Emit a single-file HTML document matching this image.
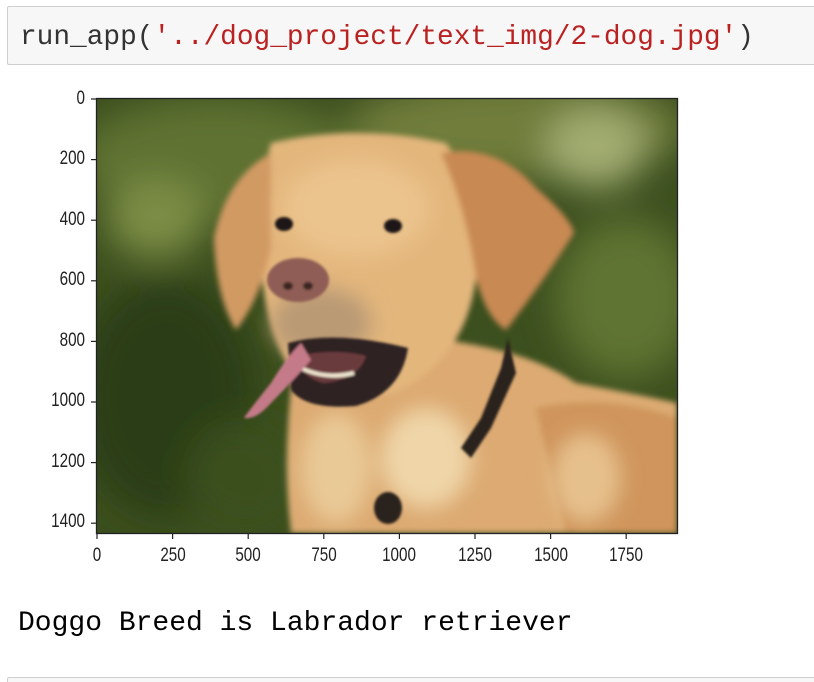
<!DOCTYPE html>
<html><head><meta charset="utf-8"><style>
html,body{margin:0;padding:0;background:#fff;width:814px;height:682px;overflow:hidden;position:relative;font-family:"Liberation Sans",sans-serif}
.cell{position:absolute;left:7px;top:6px;width:820px;height:57px;background:#f7f7f7;border:1px solid #cfcfcf;border-radius:2px}
.code{position:absolute;left:20px;top:21px;font-family:"Liberation Mono",monospace;font-size:27.8px;line-height:34px;color:#333;white-space:pre}
.s{color:#ba2121}
.out{position:absolute;left:18px;top:607px;font-family:"Liberation Mono",monospace;font-size:28px;line-height:34px;color:#000;white-space:pre}
.cell2{position:absolute;left:7px;top:677px;width:820px;height:20px;border:1px solid #cfcfcf;border-radius:2px;background:#f7f7f7}
.yl{position:absolute;font-size:19px;color:#222;transform:scaleX(0.8);transform-origin:right center;text-align:right;width:60px}
.xl{position:absolute;top:545px;font-size:19px;color:#222;transform:scaleX(0.8);width:60px;text-align:center}
</style></head><body>
<div class="cell"></div>
<div class="code">run_app(<span class="s">'../dog_project/text_img/2-dog.jpg'</span>)</div>

<svg style="position:absolute;left:0;top:0" width="814" height="682">
<defs>
<filter id="b1" x="-50%" y="-50%" width="200%" height="200%"><feGaussianBlur stdDeviation="18"/></filter>
<filter id="b2"><feGaussianBlur stdDeviation="3"/></filter>
<filter id="b4" x="-50%" y="-50%" width="200%" height="200%"><feGaussianBlur stdDeviation="10"/></filter>
<filter id="b3"><feGaussianBlur stdDeviation="1.2"/></filter>
<clipPath id="c"><rect x="0" y="0" width="581" height="435"/></clipPath>
</defs>
<g transform="translate(96,98)" clip-path="url(#c)">
<rect width="581" height="435" fill="#3c4f1e"/>
<g filter="url(#b1)">
<ellipse cx="120" cy="60" rx="140" ry="60" fill="#5f7230"/>
<ellipse cx="420" cy="30" rx="170" ry="50" fill="#6f7d3a"/>
<ellipse cx="500" cy="50" rx="50" ry="40" fill="#a3ad72"/>
<ellipse cx="60" cy="120" rx="50" ry="40" fill="#7b8d45"/>
<ellipse cx="530" cy="200" rx="70" ry="80" fill="#5e7330"/>
<ellipse cx="70" cy="300" rx="90" ry="120" fill="#2b3c15"/>
<ellipse cx="150" cy="380" rx="60" ry="60" fill="#3b4f1d"/>
</g>
<g filter="url(#b2)">
<path d="M200 250 Q230 230 330 240 Q430 250 480 285 Q560 300 581 305 L581 435 L195 435 Q185 350 200 250Z" fill="#dcaa72"/>
<path d="M440 310 Q510 295 581 320 L581 435 L470 435Z" fill="#cf955c"/>
<path d="M175 45 Q260 25 350 45 Q390 100 380 180 Q370 260 300 295 Q240 305 200 280 Q165 230 165 150 Q165 80 175 45Z" fill="#e3b67c"/>
<path d="M175 55 Q130 80 118 140 Q120 200 140 232 Q165 200 175 150Z" fill="#d29a63"/>
<path d="M345 55 Q400 45 440 90 Q475 120 478 135 Q450 180 410 232 Q390 220 380 180 Q370 110 345 55Z" fill="#c98953"/>
</g>
<g filter="url(#b4)">
<ellipse cx="330" cy="360" rx="45" ry="50" fill="#efd5a8"/>
<ellipse cx="240" cy="370" rx="35" ry="55" fill="#e9c996"/>
<ellipse cx="490" cy="380" rx="35" ry="45" fill="#e6c08c"/>
<ellipse cx="260" cy="110" rx="75" ry="50" fill="#ebc38c"/>
<ellipse cx="225" cy="225" rx="50" ry="35" fill="#b99a74"/>
</g>
<g filter="url(#b3)">
<path d="M412 240 L420 275 L395 330 L375 360 L365 350 L385 320 L405 270Z" fill="#2a201a"/>
<ellipse cx="292" cy="410" rx="14" ry="16" fill="#2a201a"/>
<path d="M192 245 Q240 232 312 250 Q305 295 260 308 Q210 312 195 292Z" fill="#2e2424"/>
<path d="M200 258 Q240 250 270 258 Q262 282 228 285 Q205 280 200 258Z" fill="#6b3a3e"/>
<path d="M205 270 Q230 282 258 275" stroke="#f0e6d0" stroke-width="4" fill="none"/>
<path d="M205 245 Q190 260 175 285 Q155 310 148 320 Q160 322 175 305 Q195 285 215 262Z" fill="#c47a88"/>
<ellipse cx="202" cy="182" rx="31" ry="22" fill="#8f5d55"/>
<ellipse cx="192" cy="188" rx="5" ry="4" fill="#3a2524"/>
<ellipse cx="212" cy="188" rx="5" ry="4" fill="#3a2524"/>
<ellipse cx="188" cy="126" rx="9" ry="7" fill="#1d1512"/>
<ellipse cx="297" cy="128" rx="9" ry="7" fill="#1d1512"/>
</g>
</g>
<rect x="96.5" y="98.5" width="581" height="435" fill="none" stroke="#222" stroke-width="1.3"/>
<g stroke="#222" stroke-width="1.2">
<line x1="91" y1="99" x2="96" y2="99"/><line x1="91" y1="159.6" x2="96" y2="159.6"/><line x1="91" y1="220.2" x2="96" y2="220.2"/><line x1="91" y1="280.8" x2="96" y2="280.8"/><line x1="91" y1="341.4" x2="96" y2="341.4"/><line x1="91" y1="402" x2="96" y2="402"/><line x1="91" y1="462.6" x2="96" y2="462.6"/><line x1="91" y1="523.2" x2="96" y2="523.2"/>
<line x1="97" y1="534" x2="97" y2="539"/><line x1="172.6" y1="534" x2="172.6" y2="539"/><line x1="248.2" y1="534" x2="248.2" y2="539"/><line x1="323.8" y1="534" x2="323.8" y2="539"/><line x1="399.4" y1="534" x2="399.4" y2="539"/><line x1="475" y1="534" x2="475" y2="539"/><line x1="550.6" y1="534" x2="550.6" y2="539"/><line x1="626.2" y1="534" x2="626.2" y2="539"/>
</g>
</svg>
<div class="yl" style="left:25px;top:88px">0</div>
<div class="yl" style="left:25px;top:148px">200</div>
<div class="yl" style="left:25px;top:209px">400</div>
<div class="yl" style="left:25px;top:269px">600</div>
<div class="yl" style="left:25px;top:330px">800</div>
<div class="yl" style="left:25px;top:390px">1000</div>
<div class="yl" style="left:25px;top:451px">1200</div>
<div class="yl" style="left:25px;top:511px">1400</div>
<div class="xl" style="left:67px">0</div>
<div class="xl" style="left:143px">250</div>
<div class="xl" style="left:218px">500</div>
<div class="xl" style="left:294px">750</div>
<div class="xl" style="left:369px">1000</div>
<div class="xl" style="left:445px">1250</div>
<div class="xl" style="left:521px">1500</div>
<div class="xl" style="left:596px">1750</div>
<div class="out">Doggo Breed is Labrador retriever</div>
<div class="cell2"></div>
</body></html>
